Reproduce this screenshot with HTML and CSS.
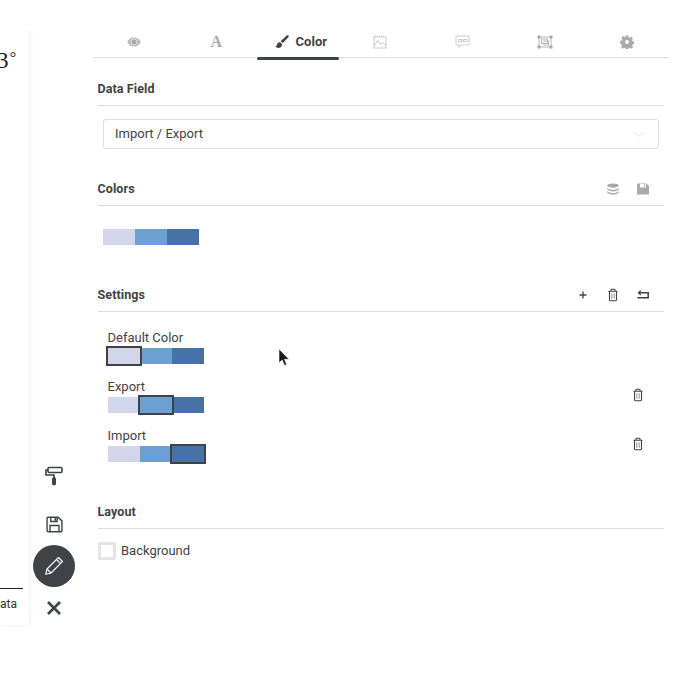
FILE: index.html
```html
<!DOCTYPE html>
<html lang="en">
<head>
<meta charset="utf-8">
<title>Color</title>
<link rel="stylesheet" href="styles.css">
</head>
<body>
<div class="app">
  <aside class="preview">
    <div class="degree"><div class="degree-top">8</div><div>3<span class="deg">°</span></div></div>
    <div class="legend">ata</div>
  </aside>
  <nav class="tools">
    <button class="tool"><svg width="18" height="20" viewBox="0 0 18 20" fill="none" stroke="#3f4246" stroke-width="1.6"><rect x="3" y="1.5" width="14" height="5" rx="1"/><path d="M3 4H1v5h8v3"/><rect x="7.8" y="12" width="2.4" height="6.5" rx=".8" fill="#3f4246"/></svg></button>
    <button class="tool"><svg width="17" height="17" viewBox="0 0 16 16" fill="none" stroke="#3f4246" stroke-width="1.3"><path d="M1 2.2c0-.6.5-1 1-1h9.5L15 4.6v9.2c0 .6-.4 1-1 1H2c-.5 0-1-.4-1-1z"/><path d="M4.500 1.200v4h6v-4M3.800 14.800V9h8.400v5.800"/><rect x="8" y="2" width="1.600" height="2.400" fill="#3f4246" stroke="none"/></svg></button>
    <button class="tool-main"><svg width="20" height="20" viewBox="0 0 20 20" fill="none" stroke="#fff" stroke-width="1.1" stroke-linejoin="round"><path d="M14.500 1.500l4 4L7 17l-5.300 1.300L3 13z"/><path d="M12.500 3.500l4 4M3 13l4 4"/></svg></button>
    <button class="tool"><svg width="14" height="14" viewBox="0 0 14 14" stroke="#3f4246" stroke-width="2.700"><path d="M1 1l12 12M13 1L1 13"/></svg></button>
  </nav>
  <main class="panel">
    <div class="tabs">
      <div class="tab"><svg width="14" height="10" viewBox="0 0 14 10"><path d="M7 .5C3.800.5 1.400 2.600.3 5 1.400 7.400 3.800 9.500 7 9.500S12.600 7.400 13.700 5C12.600 2.600 10.200.5 7 .5z" fill="#b4b6b9"/><circle cx="7" cy="5" r="3.100" fill="#a5a7aa" stroke="#fff" stroke-width=".7"/></svg></div>
      <div class="tab"><span class="tab-a">A</span></div>
      <div class="tab tab-active"><svg width="14" height="14" viewBox="0 0 14 14" fill="#3f4246"><path d="M13.400.4c-.5-.4-1.200-.3-1.700.1L5.500 6.200c.9.300 1.800 1 2.200 2.100l5.800-6.200c.4-.5.400-1.200-.1-1.700z"/><path d="M4.400 7.200C2.700 7.400 2.200 8.700 2 10c-.1.800-.8 1.300-1.600 1.200 1 1.500 3.300 2.200 5 1.300 1.500-.8 2-2.400 1.300-3.800-.4-.9-1.200-1.400-2.300-1.500z"/></svg><span>Color</span></div>
      <div class="tab"><svg width="14" height="14" viewBox="0 0 14 14" fill="none" stroke="#c6c8ca" stroke-width="1"><rect x="1" y="2" width="12" height="11"/><path d="M1 11l4-5.500 3 4 1.500-2 3.500 3"/><path d="M2 1h10" stroke-dasharray="1 1"/></svg></div>
      <div class="tab"><svg width="15" height="14" viewBox="0 0 15 14" fill="none" stroke="#c6c8ca" stroke-width="1"><path d="M1.500 1h12c.3 0 .5.200.5.500v8c0 .3-.2.500-.5.500H6l-2 2.500V10H1.500c-.3 0-.5-.2-.5-.5v-8c0-.3.200-.5.500-.5z"/><path d="M3.500 4.500h3.500v2H3.500zM8.500 4.500H12v2H8.500z"/></svg></div>
      <div class="tab"><svg width="16" height="14" viewBox="0 0 16 14" fill="none" stroke="#b4b6b9" stroke-width="1"><rect x="2" y="2" width="12" height="10"/><rect x="4.500" y="4" width="6" height="4.500"/><rect x="7" y="6" width="4.500" height="4"/><g fill="#a5a7aa" stroke="none"><rect x=".5" y=".5" width="3" height="3"/><rect x="12.500" y=".5" width="3" height="3"/><rect x=".5" y="10.500" width="3" height="3"/><rect x="12.500" y="10.500" width="3" height="3"/></g></svg></div>
      <div class="tab"><svg width="14" height="14" viewBox="0 0 14 14"><path fill="#a8aaad" fill-rule="evenodd" d="M5.800.5h2.400l.4 1.800 1.100.5 1.600-1 1.700 1.700-1 1.600.5 1.100 1.800.4v2.400l-1.800.4-.5 1.100 1 1.600-1.700 1.700-1.600-1-1.100.5-.4 1.800H5.800l-.4-1.800-1.100-.5-1.600 1-1.700-1.700 1-1.600-.5-1.100L.1 8.200V5.800l1.800-.4.500-1.100-1-1.600 1.700-1.700 1.600 1 1.100-.5zM7 5a2 2 0 1 0 0 4 2 2 0 0 0 0-4z"/></svg></div>
    </div>

    <section class="section section-field">
      <header class="section-head"><h2>Data Field</h2></header>
      <div class="select"><span class="select-value">Import / Export</span><svg width="11" height="6" viewBox="0 0 11 6" fill="none" stroke="#dfe0e3" stroke-width="1"><path d="M.5.5l5 5 5-5"/></svg></div>
    </section>

    <section class="section section-colors">
      <header class="section-head"><h2>Colors</h2>
        <div class="actions">
          <svg class="icon" width="14" height="14" viewBox="0 0 14 14" fill="#a8aaad"><ellipse cx="7" cy="3.600" rx="5.800" ry="2.100"/><path d="M1.200 5.800C2.500 7.200 4.500 7.800 7 7.800s4.500-.6 5.800-2v1.500C11.500 8.800 9.500 9.400 7 9.400S2.500 8.800 1.200 7.300z"/><path d="M1.200 9C2.500 10.400 4.500 11 7 11S11.500 10.400 12.800 9v1.500C11.500 12 9.500 12.600 7 12.600S2.500 12 1.200 10.500z"/></svg>
          <svg class="icon" width="14" height="14" viewBox="0 0 14 14" fill="#a8aaad"><path fill-rule="evenodd" d="M2 1.500h8.500L13 4v8c0 .3-.2.500-.5.500h-11c-.3 0-.5-.2-.5-.5V2c0-.3.200-.5.500-.5zM4 2v3.500h6V2zM8 2.500h1.200v2.300H8z"/></svg>
        </div>
      </header>
      <div class="ramp ramp-top"><i class="c1"></i><i class="c2"></i><i class="c3"></i></div>
    </section>

    <section class="section section-settings">
      <header class="section-head"><h2>Settings</h2>
        <div class="actions">
          <svg class="icon" width="14" height="14" viewBox="0 0 14 14" stroke="#3f4246" stroke-width="1.300"><path d="M7 3.500v7M3.500 7h7"/></svg>
          <svg class="icon" width="14" height="14" viewBox="0 0 14 14" fill="none" stroke="#3f4246" stroke-width="1.100"><path d="M2.500 3.300h9M3.500 3.300v8.500c0 .5.400.9.900.9h5.200c.5 0 .9-.4.900-.9V3.300M5 3.300V2c0-.4.300-.7.700-.7h2.600c.4 0 .7.300.7.700v1.300"/><path d="M5.800 5.300v5.400M8.200 5.300v5.400" stroke="#9a9c9f"/></svg>
          <svg class="icon" width="14" height="14" viewBox="0 0 14 14" fill="none" stroke="#3f4246" stroke-width="1.500"><path d="M2.500 4.800h9.700v5H1.500"/><path d="M4.800 2.600L2.500 4.800l2.300 2.200" stroke-width="1.300"/></svg>
        </div>
      </header>
      <div class="rows">
        <div class="row">
          <div class="row-main"><div class="row-label">Default Color</div>
          <div class="ramp"><i class="c1 on"></i><i class="c2"></i><i class="c3"></i></div></div>
        </div>
        <div class="row">
          <div class="row-main"><div class="row-label">Export</div>
          <div class="ramp"><i class="c1"></i><i class="c2 on"></i><i class="c3"></i></div></div>
          <svg class="row-del" width="14" height="14" viewBox="0 0 14 14" fill="none" stroke="#3f4246" stroke-width="1.100"><path d="M2.500 3.300h9M3.500 3.300v8.500c0 .5.400.9.900.9h5.200c.5 0 .9-.4.900-.9V3.300M5 3.300V2c0-.4.300-.7.700-.7h2.600c.4 0 .7.300.7.700v1.300"/><path d="M5.800 5.300v5.400M8.200 5.300v5.400" stroke="#9a9c9f"/></svg>
        </div>
        <div class="row">
          <div class="row-main"><div class="row-label">Import</div>
          <div class="ramp"><i class="c1"></i><i class="c2"></i><i class="c3 on"></i></div></div>
          <svg class="row-del" width="14" height="14" viewBox="0 0 14 14" fill="none" stroke="#3f4246" stroke-width="1.100"><path d="M2.500 3.300h9M3.500 3.300v8.500c0 .5.400.9.900.9h5.200c.5 0 .9-.4.900-.9V3.300M5 3.300V2c0-.4.300-.7.700-.7h2.600c.4 0 .7.300.7.700v1.300"/><path d="M5.800 5.300v5.400M8.200 5.300v5.400" stroke="#9a9c9f"/></svg>
        </div>
      </div>
    </section>

    <section class="section section-layout">
      <header class="section-head"><h2>Layout</h2></header>
      <label class="check"><span class="box"></span><span class="check-label">Background</span></label>
    </section>
  </main>
  <svg class="cursor" width="12" height="18" viewBox="0 0 12 18"><path d="M1 0v14l3.200-3 2.200 5.500 2.300-1L6.500 10.300H11z" fill="#1b1b1d" stroke="#fff" stroke-width=".6"/></svg>
</div>
</body>
</html>
```

FILE: styles.css
```css
* { box-sizing: border-box; }
html, body { margin: 0; padding: 0; background: #fff; }
body {
  width: 684px;
  height: 684px;
  overflow: hidden;
  font-family: Roboto, "Liberation Sans", sans-serif;
  color: #3f4246;
}
.app {
  position: relative;
  display: flex;
  width: 684px;
  height: 684px;
}
.preview {
  width: 30px;
  height: 595px;
  margin-top: 30px;
  display: flex;
  flex-direction: column;
  justify-content: space-between;
  overflow: hidden;
  background: #fff;
  border-right: 1px solid #f3f5f8;
  border-bottom-right-radius: 4px;
  box-shadow: 1px 1px 3px rgba(40, 60, 100, .06);
}
.degree {
  font-family: "Liberation Serif", serif;
  font-size: 23px;
  line-height: 17px;
  margin-top: 6px;
  margin-left: -3px;
  color: #222;
  white-space: nowrap;
}
.degree-top { margin-left: -8px; font-size: 18px; line-height: 13px; }
.deg { font-size: 17px; vertical-align: 5px; margin-left: 1px; }
.legend {
  height: 37px;
  margin-right: 6px;
  border-top: 1px solid #222;
  padding-top: 7px;
  font-size: 12px;
  line-height: 16px;
  color: #333;
}
.tools {
  width: 48px;
  padding-top: 464px;
  display: flex;
  flex-direction: column;
  align-items: center;
}
.tool {
  width: 42px;
  height: 24px;
  margin: 0;
  padding: 0;
  border: 0;
  background: none;
  display: flex;
  align-items: center;
  justify-content: center;
}
.tool:nth-child(1) { margin-bottom: 24px; }
.tool:nth-child(2) { margin-bottom: 9px; }
.tool:nth-child(4) { margin-top: 9px; }
.tool-main {
  width: 42px;
  height: 42px;
  padding: 0;
  border: 0;
  border-radius: 50%;
  background: #3f4246;
  display: flex;
  align-items: center;
  justify-content: center;
}
.panel {
  width: 576px;
  margin-left: 15px;
  padding-top: 25px;
}
.tabs {
  display: grid;
  grid-template-columns: repeat(7, 82.14px);
  height: 33px;
  border-bottom: 1px solid #dcdde0;
}
.tab {
  position: relative;
  display: flex;
  align-items: center;
  justify-content: center;
  gap: 7px;
  height: 33px;
  font-size: 13px;
  font-weight: 700;
}
.tab-active { padding-left: 5px; }
.tab-a {
  font-family: "Liberation Serif", serif;
  font-size: 16px;
  color: #aaacaf;
}
.tab-active::after {
  content: "";
  position: absolute;
  left: 0;
  right: 0;
  bottom: -2px;
  height: 3px;
  border-radius: 2px;
  background: #3f4246;
}
.section { margin: 0 5px 0 4.500px; }
.section-head {
  display: flex;
  align-items: center;
  justify-content: space-between;
  height: 33px;
  padding-bottom: 1px;
  border-bottom: 1px solid #dcdde0;
}
.section-head h2 {
  margin: 0;
  font-size: 12.500px;
  line-height: 16px;
  font-weight: 700;
  letter-spacing: .1px;
}
.actions { display: flex; gap: 16px; margin-right: 14px; }
.icon { display: block; }
.section-field { padding-top: 15px; }
.select {
  display: flex;
  align-items: center;
  justify-content: space-between;
  width: 556px;
  height: 30px;
  margin: 13px 0 0 5.500px;
  padding: 0 14px 0 11px;
  border: 1px solid #dcdde0;
  border-radius: 3px;
  font-size: 13px;
}
.select-value { padding-bottom: 2px; }
.section-colors { padding-top: 24px; }
.ramp { display: flex; width: 96px; height: 16px; }
.ramp i { display: block; flex: 1; position: relative; }
.ramp-top { margin: 23px 0 0 5.500px; }
.c1 { background: #d3d6ea; }
.c2 { background: #6ca0d2; }
.c3 { background: #4772a7; }
.ramp i.on::after {
  content: "";
  position: absolute;
  inset: -2px;
  border: 2px solid #3f4246;
  background: inherit;
  z-index: 1;
}
.section-settings { padding-top: 34px; }
.rows { padding-top: 16px; }
.row {
  display: flex;
  align-items: flex-end;
  justify-content: space-between;
  height: 36px;
  margin-bottom: 13px;
  padding-left: 10.500px;
  padding-right: 19px;
}
.row-label { font-size: 13px; line-height: 16px; margin-bottom: 2px; margin-left: -.5px; }
.row-del { display: block; margin-bottom: 11px; }
.section-layout { padding-top: 21px; }
.check {
  display: flex;
  align-items: center;
  gap: 5px;
  margin: 13px 0 0 .5px;
  font-size: 13px;
}
.check-label { padding-bottom: 2px; }
.box {
  width: 18px;
  height: 18px;
  border: 3px solid #e3e4e7;
  border-radius: 2px;
}
.cursor { position: absolute; left: 278px; top: 349px; }
```
